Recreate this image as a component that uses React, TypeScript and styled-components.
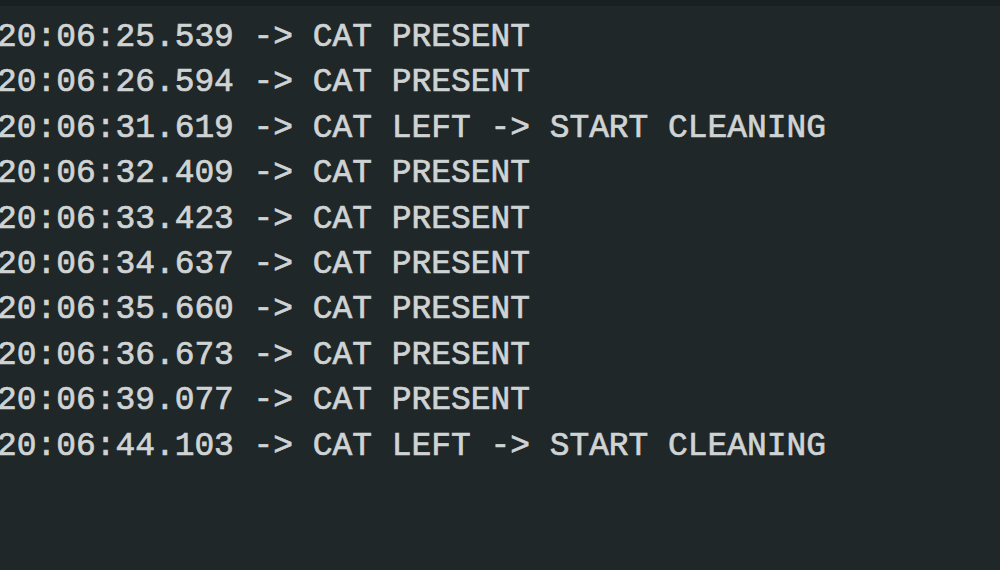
import React from "react";
import styled, { createGlobalStyle } from "styled-components";

const Global = createGlobalStyle`
  html, body { margin: 0; padding: 0; background: #1f2729; }
  body { width: 1000px; height: 570px; overflow: hidden; }
`;

const Screen = styled.div`
  width: 1000px;
  height: 570px;
  background: #1f2729;
  display: flex;
  flex-direction: column;
  overflow: hidden;
`;

const TopBar = styled.div`
  height: 6px;
  flex: none;
  background: #182022;
`;

const Log = styled.div`
  display: flex;
  flex-direction: column;
  padding-top: 9px;
  margin-left: -3px;
`;

const Line = styled.div`
  font-family: "Liberation Mono", "Courier New", monospace;
  font-weight: normal;
  -webkit-text-stroke: 0.7px #cfd3d3;
  font-size: 32.9px;
  line-height: 45.4px;
  color: #cfd3d3;
  white-space: pre;
`;

const lines = [
  "20:06:25.539 -> CAT PRESENT",
  "20:06:26.594 -> CAT PRESENT",
  "20:06:31.619 -> CAT LEFT -> START CLEANING",
  "20:06:32.409 -> CAT PRESENT",
  "20:06:33.423 -> CAT PRESENT",
  "20:06:34.637 -> CAT PRESENT",
  "20:06:35.660 -> CAT PRESENT",
  "20:06:36.673 -> CAT PRESENT",
  "20:06:39.077 -> CAT PRESENT",
  "20:06:44.103 -> CAT LEFT -> START CLEANING",
];

export default function App() {
  return (
    <>
      <Global />
      <Screen>
        <TopBar />
        <Log>
          {lines.map((l, i) => (
            <Line key={i}>{l}</Line>
          ))}
        </Log>
      </Screen>
    </>
  );
}
